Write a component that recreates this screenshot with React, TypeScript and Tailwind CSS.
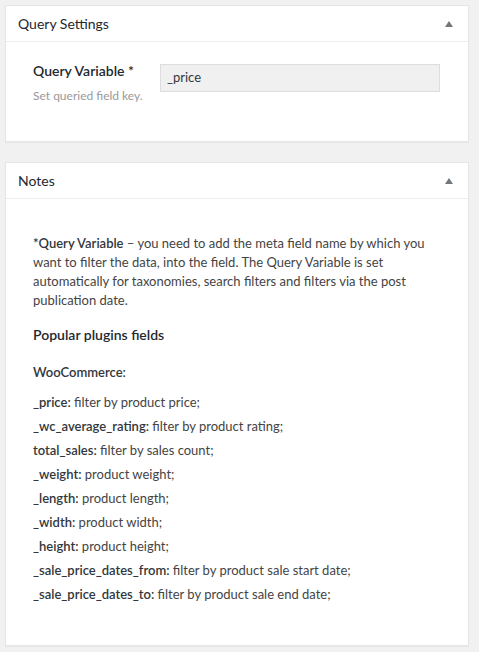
import React from 'react';

const font = { fontFamily: 'Lato, "Open Sans", sans-serif' };

function Toggle() {
  return (
    <svg width="10" height="8" viewBox="0 0 10 8" className="mr-[2px]">
      <path d="M1 7 L5 1 L9 7 Z" fill="#72777c" />
    </svg>
  );
}

function Postbox({ title, children, className = '' }: { title: string; children: React.ReactNode; className?: string }) {
  return (
    <div className={`border border-[#e5e5e5] bg-white shadow-[0_1px_1px_rgba(0,0,0,0.04)] ${className}`}>
      <div className="flex h-[36px] items-center justify-between border-b border-[#eee] px-3">
        <h2 className="text-[14px] text-[#23282d]">{title}</h2>
        <Toggle />
      </div>
      {children}
    </div>
  );
}

const fields: [string, string][] = [
  ['_price', 'filter by product price;'],
  ['_wc_average_rating', 'filter by product rating;'],
  ['total_sales', 'filter by sales count;'],
  ['_weight', 'product weight;'],
  ['_length', 'product length;'],
  ['_width', 'product width;'],
  ['_height', 'product height;'],
  ['_sale_price_dates_from', 'filter by product sale start date;'],
  ['_sale_price_dates_to', 'filter by product sale end date;'],
];

export default function App() {
  return (
    <div className="min-h-screen bg-[#f1f1f1] px-[5px] pt-[5px] pb-2" style={font}>
      <div className="w-[464px]">
        <Postbox title="Query Settings">
          <div className="flex h-[99px] pl-[27px] pt-[19px]">
            <div className="w-[127px]">
              <div className="text-[14px] font-semibold leading-[20px] text-[#23282d]">Query Variable *</div>
              <div className="mt-[7px] text-[12px] leading-[16px] text-[#999]">Set queried field key.</div>
            </div>
            <div className="mt-[3px] flex h-[28px] w-[280px] items-center border border-[#ddd] bg-[#f0f0f0] px-[6px] text-[13px] text-[#32373c]">
              _price
            </div>
          </div>
        </Postbox>

        <Postbox title="Notes" className="mt-[20px]">
          <div className="px-[27px] pt-[35px] pb-[41px] text-[13px] text-[#444]">
            <p className="leading-[19px]">
              <span className="font-semibold text-[#32373c]">*Query Variable</span> – you need to add the meta field name by which you want to filter the data, into the field. The Query Variable is set automatically for taxonomies, search filters and filters via the post publication date.
            </p>
            <h3 className="mt-[15px] text-[14px] font-semibold leading-[20px] text-[#23282d]">Popular plugins fields</h3>
            <p className="mt-[17px] font-semibold leading-[20px] text-[#32373c]">WooCommerce:</p>
            <ul className="mt-[10px] flex flex-col gap-[4px]">
              {fields.map(([k, v]) => (
                <li key={k} className="leading-[20px]">
                  <span className="font-semibold text-[#32373c]">{k}:</span> {v}
                </li>
              ))}
            </ul>
          </div>
        </Postbox>
      </div>
    </div>
  );
}
